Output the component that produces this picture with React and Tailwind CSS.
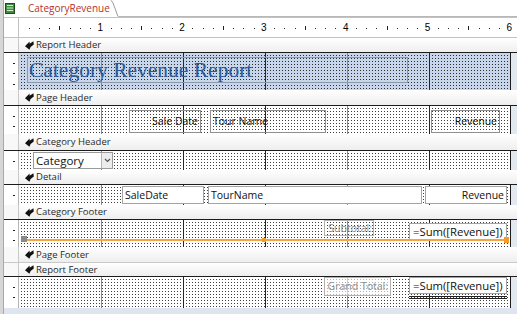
import React from "react";

const INCH = 81.8;
const DOTS_WHITE =
  "bg-[repeating-linear-gradient(90deg,#ffffff_0_2px,transparent_2px_3px),repeating-linear-gradient(180deg,#ffffff_0_2px,#3c3c3c_2px_3px)]";
const DOTS_BLUE =
  "bg-[repeating-linear-gradient(90deg,#c7d6eb_0_2px,transparent_2px_3px),repeating-linear-gradient(180deg,#c7d6eb_0_2px,#2c2c2c_2px_3px)]";

const GRID = [
  { x: 82, c: "bg-[#8a8a8a]" },
  { x: 164, c: "bg-[#262626]" },
  { x: 246, c: "bg-[#262626]" },
  { x: 328, c: "bg-[#8a8a8a]" },
  { x: 410, c: "bg-[#262626]" },
];

function SectionIcon() {
  return (
    <svg width="9" height="9" viewBox="0 0 9 9" className="shrink-0">
      <path d="M0 5.2 L4.6 0.6 L4.6 2.8 L8.4 0.2 L8.8 3.4 L5.6 6 L4.4 8.8 Z" fill="#111" />
    </svg>
  );
}

function Bar({ label, className }) {
  return (
    <div className={"flex " + className}>
      <div className="w-[15px] shrink-0 bg-[#f8f8f8] border-r border-[#c9c9c9]" />
      <div className="flex-1 flex items-center gap-[2px] pl-[6px] bg-[linear-gradient(#ffffff,#eeeeee)] text-[9.5px] text-[#2a2a2a] font-['Open_Sans',sans-serif] leading-none">
        <SectionIcon />
        <span>{label}</span>
      </div>
    </div>
  );
}

function VRuler({ h }) {
  const ticks = [];
  for (let k = 1; k * 10.22 < h - 1; k++) ticks.push(k);
  return (
    <div className="relative w-[15px] shrink-0 bg-white border-r border-[#b5b5b5]">
      {ticks.map((k) => (
        <div
          key={k}
          className={k % 4 === 0 ? "absolute left-[8px] w-[4px] h-px bg-[#222]" : "absolute left-[9px] w-[2px] h-px bg-[#222]"}
          style={{ top: Math.round(k * 10.22) }}
        />
      ))}
    </div>
  );
}

function Section({ className, h, blue, children }) {
  return (
    <div className={"flex border-t border-[#1c1c1c] " + className}>
      <VRuler h={h} />
      <div className={"relative w-[491px] shrink-0 overflow-hidden " + (blue ? DOTS_BLUE : DOTS_WHITE)}>
        {GRID.map((g) => (
          <div key={g.x} className={"absolute top-0 bottom-0 w-px " + g.c} style={{ left: g.x }} />
        ))}
        {children}
      </div>
      <div className="flex-1 border-l border-[#1c1c1c] bg-[#e3e8ef]" />
    </div>
  );
}

function HRuler() {
  const items = [];
  for (let k = 1; k <= 48; k++) {
    const x = k * (INCH / 8) - 0.5;
    if (k % 8 === 0) {
      items.push(
        <span
          key={k}
          className="absolute top-[4px] w-[10px] -ml-[5px] text-center text-[10px] leading-[11px] text-black font-['Liberation_Sans',sans-serif]"
          style={{ left: x }}
        >
          {k / 8}
        </span>
      );
    } else if (k % 4 === 0) {
      items.push(<div key={k} className="absolute top-[8px] w-px h-[4px] bg-[#222]" style={{ left: Math.round(x) }} />);
    } else {
      items.push(<div key={k} className="absolute top-[10px] w-px h-px bg-[#222]" style={{ left: Math.round(x) }} />);
    }
  }
  return <div className="relative w-[491px] shrink-0 bg-white">{items}</div>;
}

function TabIcon() {
  return (
    <svg width="10" height="11" viewBox="0 0 10 11" className="shrink-0">
      <rect x="0.5" y="0.5" width="9" height="10" fill="#3f8a3f" stroke="#1e4d1e" />
      <rect x="2" y="2" width="6" height="1" fill="#d8f0d8" />
      <rect x="2" y="4.5" width="6" height="1" fill="#d8f0d8" />
      <rect x="2" y="7" width="6" height="1" fill="#d8f0d8" />
    </svg>
  );
}

const CTRL = "font-['Open_Sans',sans-serif] text-[10.5px] leading-none text-[#111]";
const SUM = "font-['Open_Sans',sans-serif] text-[11.3px] leading-none text-[#111]";

export default function App() {
  return (
    <div className="w-[517px] h-[314px] overflow-hidden bg-white flex">
      <div className="w-[3px] shrink-0 bg-[#d6d6d6] border-r border-[#a9a9a9] box-content" />
      <div className="flex-1 flex flex-col">
        {/* tab row */}
        <div className="flex h-[17px] shrink-0">
          <div className="flex items-center gap-[13px] pl-[1px] w-[106px] bg-white">
            <TabIcon />
            <span className="text-[10px] leading-none text-[#b5302d] font-['Open_Sans',sans-serif] -mt-[2px]">
              CategoryRevenue
            </span>
          </div>
          <svg width="9" height="17" viewBox="0 0 9 17" className="shrink-0">
            <path d="M0.5 0 Q2 1 3 3 L8 16.5" stroke="#9a9a9a" fill="none" />
            <path d="M8 16.5 L9 16.5" stroke="#b8b8b8" />
          </svg>
          <div className="flex-1 border-b border-[#b8b8b8]" />
        </div>
        {/* ruler row */}
        <div className="flex h-[21px] shrink-0 border-t border-b border-[#c2c2c2]">
          <div className="w-[15px] shrink-0 bg-white border-r border-[#c2c2c2]" />
          <HRuler />
          <div className="flex-1 bg-white" />
        </div>

        <Bar label="Report Header" className="h-[14px] shrink-0" />
        <Section className="h-[38px] shrink-0" h={37} blue>
          <div className="absolute left-[8px] top-[4px] w-[381px] h-[26px] border border-[#8d97a6] pl-[1px] font-['Liberation_Serif',serif] text-[21.5px] leading-[24px] text-[#2a5a9a] whitespace-nowrap">
            Category Revenue Report
          </div>
        </Section>

        <Bar label="Page Header" className="h-[15px] shrink-0" />
        <Section className="h-[29px] shrink-0" h={28}>
          <div className={"absolute left-[110px] top-[4px] w-[72px] h-[23px] border border-[#8f8f8f] flex items-center justify-end pr-[2px] " + CTRL}>
            Sale Date
          </div>
          <div className={"absolute left-[191px] top-[4px] w-[116px] h-[23px] border border-[#8f8f8f] flex items-center pl-[2px] " + CTRL}>
            Tour Name
          </div>
          <div className={"absolute left-[412px] top-[4px] w-[69px] h-[23px] border border-[#8f8f8f] flex items-center justify-end pr-[2px] " + CTRL}>
            Revenue
          </div>
        </Section>

        <Bar label="Category Header" className="h-[16px] shrink-0" />
        <Section className="h-[20px] shrink-0" h={19}>
          <div className="absolute left-[14px] top-[1px] w-[80px] h-[17px] border border-[#9a9a9a] bg-white flex">
            <div className="flex-1 flex items-center pl-[2px] font-['Open_Sans',sans-serif] text-[11.5px] leading-none text-[#111]">
              Category
            </div>
            <div className="w-[11px] border-l border-[#b5b5b5] bg-[#ececec] flex items-center justify-center">
              <svg width="7" height="5" viewBox="0 0 7 5">
                <path d="M1 1 L3.5 3.5 L6 1" stroke="#555" strokeWidth="1.2" fill="none" />
              </svg>
            </div>
          </div>
        </Section>

        <Bar label="Detail" className="h-[14px] shrink-0" />
        <Section className="h-[21px] shrink-0" h={20}>
          <div className={"absolute left-[103px] top-[1px] w-[82px] h-[18px] bg-white border border-[#a3a3a3] flex items-center pl-[2px] " + CTRL}>
            SaleDate
          </div>
          <div className={"absolute left-[189px] top-[1px] w-[214px] h-[18px] bg-white border border-[#a3a3a3] flex items-center pl-[2px] " + CTRL}>
            TourName
          </div>
          <div className={"absolute left-[406px] top-[1px] w-[82px] h-[18px] bg-white border border-[#a3a3a3] flex items-center justify-end pr-[2px] " + CTRL}>
            Revenue
          </div>
        </Section>

        <Bar label="Category Footer" className="h-[14px] shrink-0" />
        <Section className="h-[28px] shrink-0" h={27}>
          <div className="absolute left-[305px] top-0 w-[50px] h-[16px] border border-[#b0b0b0] flex items-center justify-end pr-[1px] font-['Open_Sans',sans-serif] text-[10.5px] leading-none text-[#8e8e8e]">
            Subtotal:
          </div>
          <div className={"absolute left-[390px] top-[3px] w-[98px] h-[18px] bg-white border border-[#a3a3a3] flex items-center pl-[3px] " + SUM}>
            =Sum([Revenue])
          </div>
          <div className="absolute left-[3px] top-[19px] w-[486px] h-[2px] bg-[#f3a544]" />
          <div className="absolute left-[2px] top-[16px] w-[6px] h-[6px] bg-[#8a8a8a]" />
          <div className="absolute left-[243px] top-[18px] w-[4px] h-[4px] bg-[#f39a2a]" />
          <div className="absolute left-[485px] top-[17px] w-[5px] h-[6px] bg-[#f39a2a]" />
        </Section>

        <Bar label="Page Footer" className="h-[15px] shrink-0" />
        <Bar label="Report Footer" className="h-[14px] shrink-0 border-t border-[#c8c8c8]" />
        <Section className="h-[32px] shrink-0" h={31}>
          <div className="absolute left-[305px] top-0 w-[67px] h-[19px] border border-[#b0b0b0] bg-white/60 flex items-center justify-end pr-[2px] font-['Open_Sans',sans-serif] text-[10.5px] leading-none text-[#8e8e8e]">
            Grand Total:
          </div>
          <div className={"absolute left-[390px] top-0 w-[98px] h-[17px] bg-white border border-[#a3a3a3] flex items-center pl-[3px] " + SUM}>
            =Sum([Revenue])
          </div>
          <div className="absolute left-[390px] top-[19px] w-[98px] h-px bg-[#222]" />
          <div className="absolute left-[390px] top-[21px] w-[98px] h-px bg-[#222]" />
        </Section>

        <div className="flex-1 bg-[#dfe5ee]" />
      </div>
    </div>
  );
}
